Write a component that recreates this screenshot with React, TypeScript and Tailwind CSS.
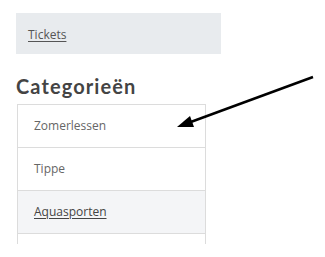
export default function App() {
  const rows = [
    { label: "Zomerlessen", link: false, active: false },
    { label: "Tippe", link: false, active: false },
    { label: "Aquasporten", link: true, active: true },
    { label: "", link: false, active: false },
  ];

  return (
    <div className="relative w-[325px] h-[257px] bg-white overflow-hidden font-['Open_Sans',sans-serif]">
      <div className="pt-[13px] pl-4">
        <div className="w-[205px] h-[41px] bg-[#e8ebee] flex items-center pl-3">
          <a className="text-[12px] text-[#555] underline underline-offset-2 leading-none mt-[2px]">
            Tickets
          </a>
        </div>
        <h2 className="mt-[20px] text-[20px] font-bold text-[#444] leading-[24px] font-['Lato',sans-serif] tracking-[1.1px]">
          Categorieën
        </h2>
        <div className="mt-[6px] ml-px w-[189px] h-[140px] overflow-hidden border-x border-t border-[#dcdcdc]">
          {rows.map((r, i) => (
            <div
              key={i}
              className={`h-[43px] flex items-center pl-[16px] border-b border-[#dcdcdc] text-[12px] ${
                r.active ? "bg-[#f4f5f7] text-[#444]" : "bg-white text-[#666]"
              }`}
            >
              {r.link ? <a className="underline underline-offset-2">{r.label}</a> : r.label}
            </div>
          ))}
        </div>
      </div>
      <svg className="absolute left-0 top-0" width="325" height="257" viewBox="0 0 325 257">
        <line x1="313" y1="77" x2="188" y2="123" stroke="#000" strokeWidth="2.5" />
        <polygon points="177,127 190,116 194,127" fill="#000" />
      </svg>
    </div>
  );
}
